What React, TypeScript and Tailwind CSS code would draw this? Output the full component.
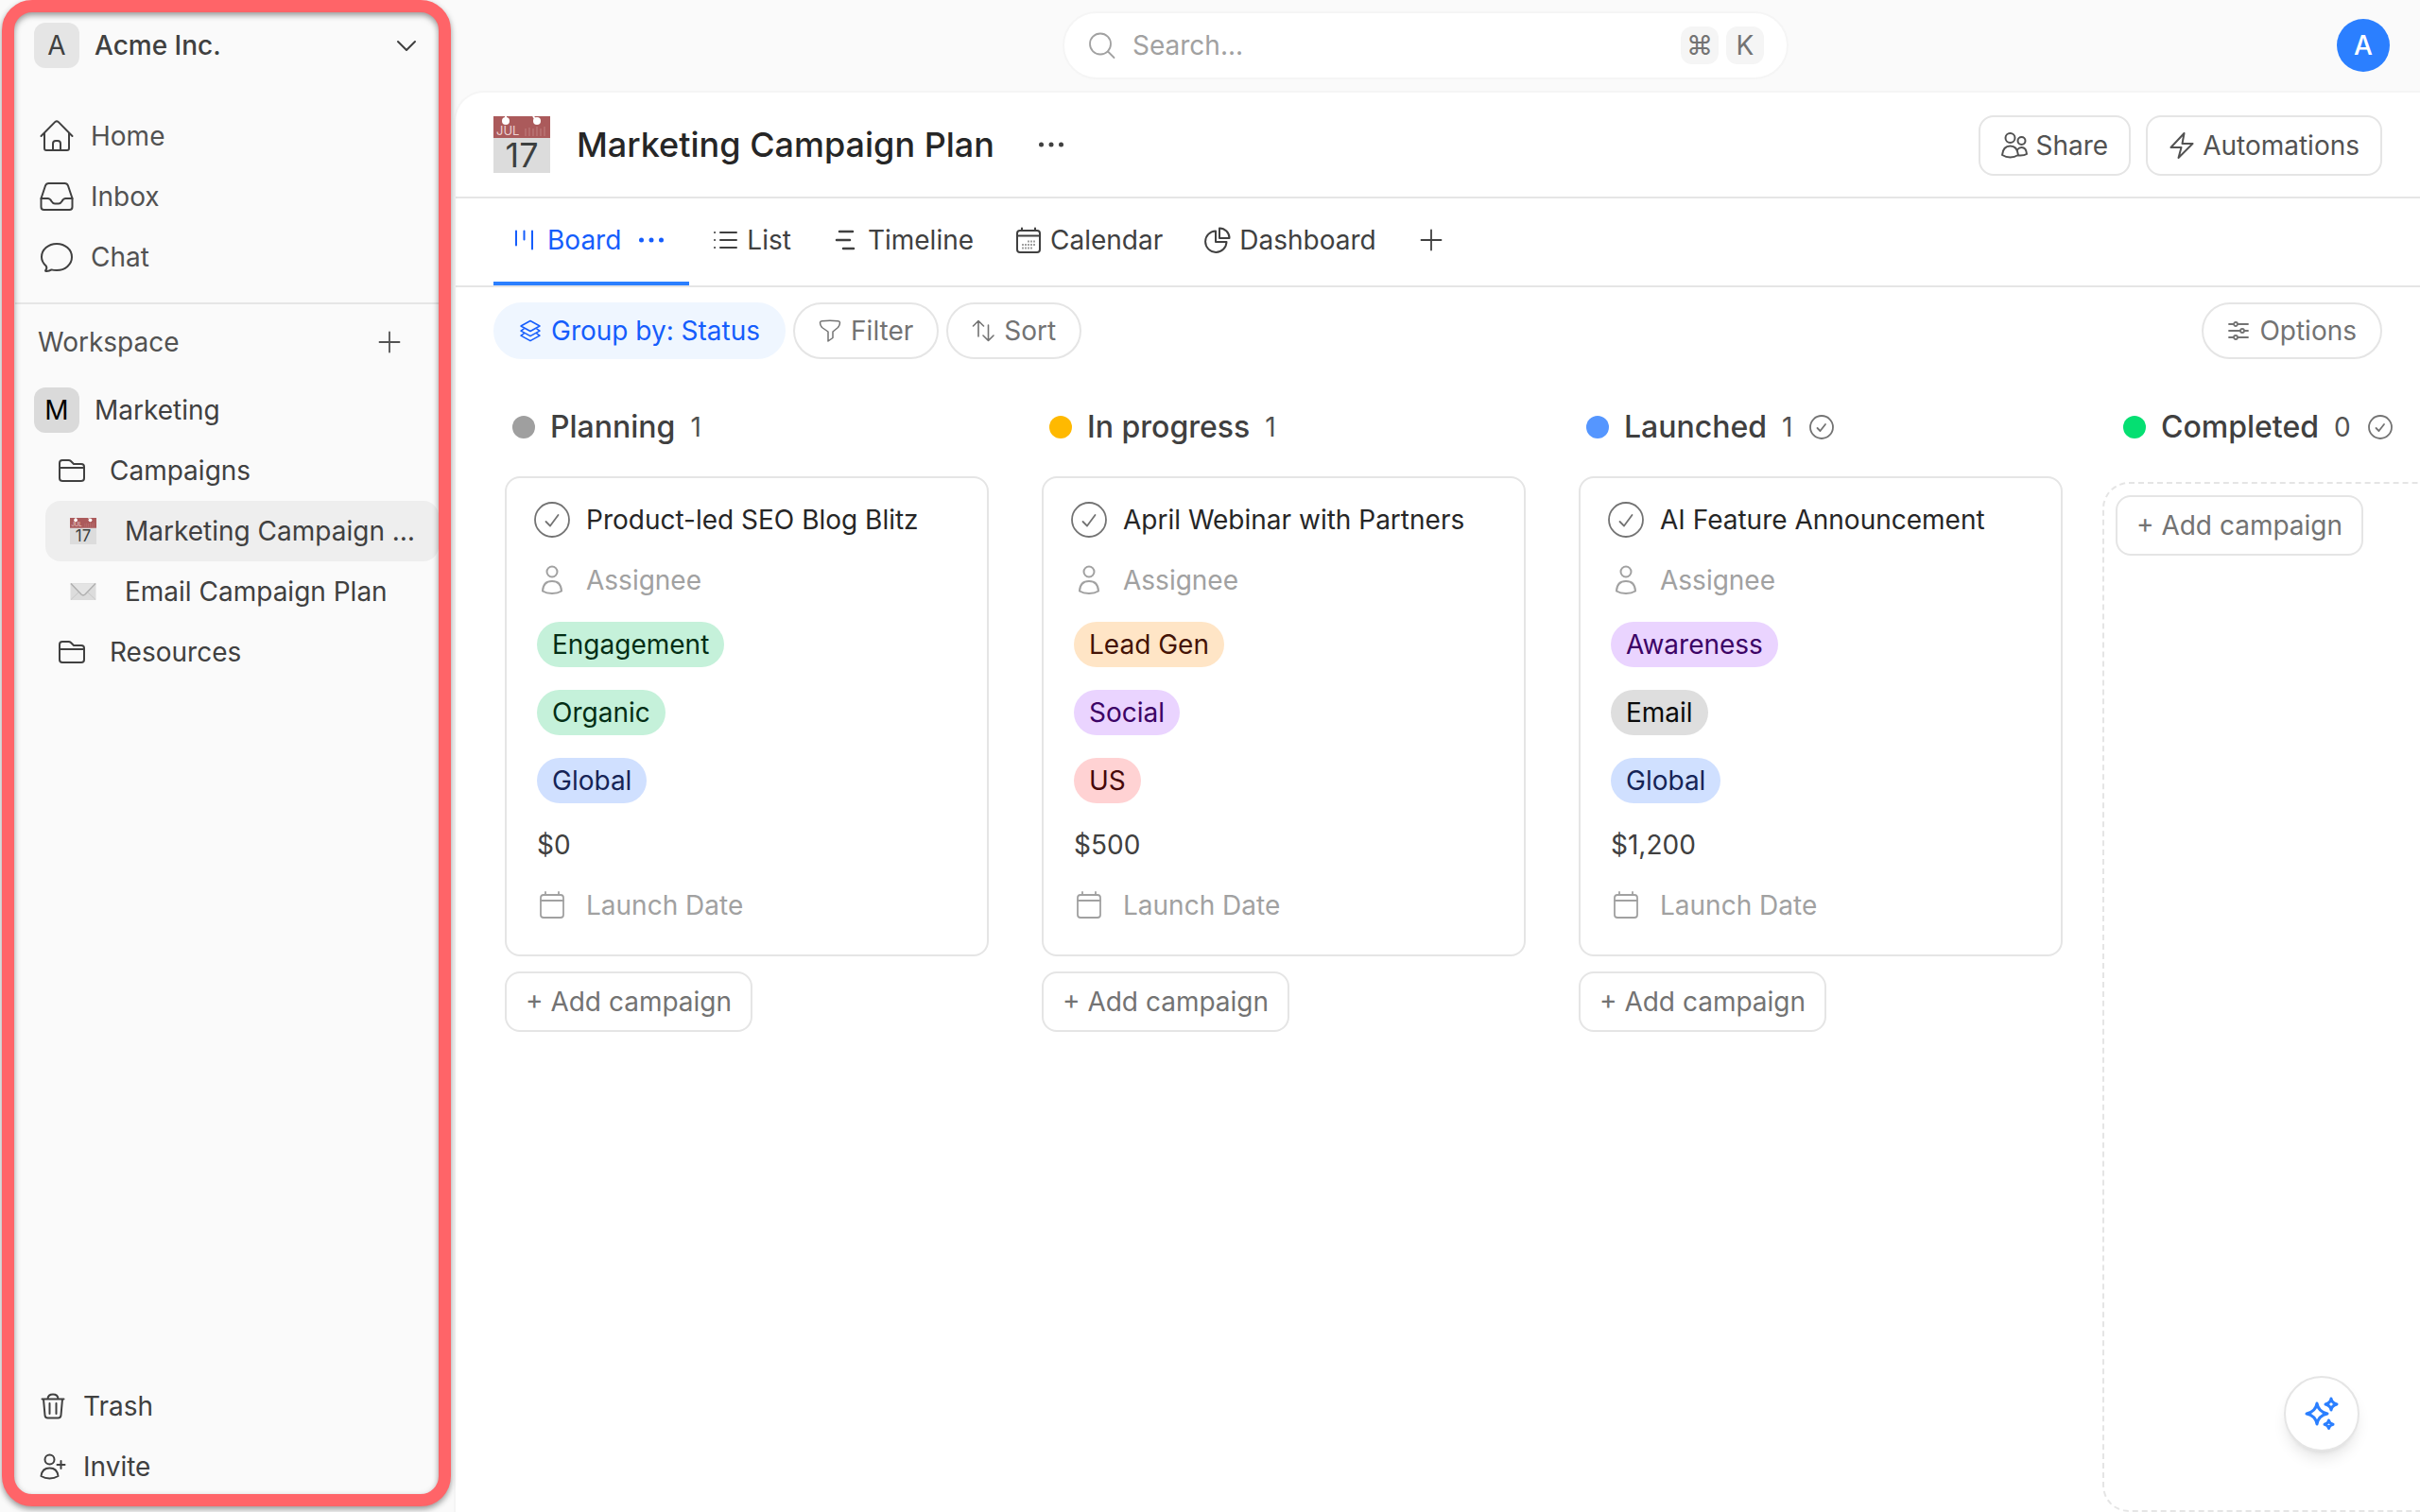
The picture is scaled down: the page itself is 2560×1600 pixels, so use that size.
import { useState, type ReactNode } from "react";

// ---------- icons ----------

function Icon({
  box,
  stroke = 2,
  className,
  children,
}: {
  box: number;
  stroke?: number;
  className?: string;
  children: ReactNode;
}) {
  return (
    <svg
      viewBox={`0 0 ${box} ${box}`}
      width={box}
      height={box}
      fill="none"
      stroke="currentColor"
      strokeWidth={stroke}
      strokeLinecap="round"
      strokeLinejoin="round"
      aria-hidden="true"
      className={"shrink-0 " + (className ?? "")}
    >
      {children}
    </svg>
  );
}

const HomeIcon = () => (
  <Icon box={36} className="text-[#404040]">
    <path d="M1.5 18 16.4 2.9q1.6-1.4 3.2 0L34.5 18" />
    <path d="M5 15v16q0 2 2 2h22q2 0 2-2V15" />
    <path d="M14 33v-7q0-3 3-3h2q3 0 3 3v7" />
  </Icon>
);

const InboxIcon = () => (
  <Icon box={36} className="text-[#404040]">
    <path d="M1.5 20 6 6.5Q7 4 9.5 4h17Q29 4 30 6.5L34.5 20v9q0 3-3 3h-27q-3 0-3-3z" />
    <path d="M1.5 20h7q2.5 0 4 3 1.5 2.5 3.5 2.5h4q2 0 3.5-2.5 1.5-3 4-3h7" />
  </Icon>
);

const ChatIcon = () => (
  <Icon box={36} className="text-[#404040]">
    <path d="M6.8 27.5C3.8 24.8 2 21.5 2 18 2 10.3 9 4 18 4s16 6.3 16 14-7 14-16 14c-2 0-3.8-.1-5.5-.6-1.5 1-3.5 1.8-5.7 1.6-.8 0-1-.6-.4-1.2 1-1.2 1.2-2.8.4-4.3z" />
  </Icon>
);

const ChevronIcon = () => (
  <Icon box={24} className="text-[#404040]">
    <path d="M3 8l9 9 9-9" />
  </Icon>
);

const PlusIcon = () => (
  <Icon box={24} stroke={1.8}>
    <path d="M12 1.5v21M1.5 12h21" />
  </Icon>
);

const FolderIcon = () => (
  <Icon box={28} className="text-[#404040]">
    <path d="M1 11V6q0-3 3-3h6.5q1.5 0 2.5 1l3 3h8q3 0 3 3v12q0 3-3 3H4q-3 0-3-3V11h26" />
  </Icon>
);

const TrashIcon = () => (
  <Icon box={28} className="text-[#404040]">
    <path d="M2.5 6.500h23M4 6.500l1.500 17q.2 3 3 3h11q2.800 0 3-3L24 6.500M8.500 6q.5-4.500 5.500-4.500t5.500 4.500M10.500 11v11M17.500 11v11" />
  </Icon>
);

const InviteIcon = () => (
  <Icon box={28} className="text-[#404040]">
    <circle cx="10.5" cy="6.5" r="5" />
    <path d="M1.5 24q1-8.5 9-8.5t9 8.5q-4 2.5-9 2.5t-9-2.5zM22.5 8v8M18.5 12h8" />
  </Icon>
);

const UserIcon = () => (
  <Icon box={32}>
    <circle cx="16" cy="7" r="5.5" />
    <path d="M6 27.5Q6.5 17 16 17t10 10.5q-4 2.5-10 2.5T6 27.5z" />
  </Icon>
);

const ShareIcon = () => (
  <Icon box={28}>
    <circle cx="9.5" cy="6" r="5" />
    <circle cx="21.5" cy="9" r="4" />
    <path d="M1 24q1-9.5 8.5-9.5T18 24q-4 2.5-8.5 2.5T1 24z" />
    <path d="M17 18.5q2-2.5 4.5-2.5 5 0 5.5 7-3 2-9 1.5" />
  </Icon>
);

const BoltIcon = () => (
  <Icon box={28}>
    <path d="M16.5 1 2.5 16h11l-3 11L25.5 12H14.5z" />
  </Icon>
);

const DotsIcon = () => (
  <Icon box={28}>
    <g fill="currentColor" stroke="none">
      <circle cx="3.5" cy="14" r="2.5" />
      <circle cx="14" cy="14" r="2.5" />
      <circle cx="24.5" cy="14" r="2.5" />
    </g>
  </Icon>
);

const SearchIcon = () => (
  <Icon box={32} stroke={1.8} className="text-[#a1a1a1]">
    <circle cx="14" cy="14.5" r="11" />
    <path d="M22 22.5l6.500 6.500" />
  </Icon>
);

const BoardIcon = () => (
  <Icon box={28}>
    <path d="M4 4.5v15M12.500 4.500v9M21 4.500v19" />
  </Icon>
);

const ListIcon = () => (
  <Icon box={28}>
    <path d="M9 6h17M9 14h17M9 22h17M3 6h.1M3 14h.1M3 22h.1" />
  </Icon>
);

const TimelineIcon = () => (
  <Icon box={28}>
    <path d="M7 5h14M4 14h14M11 23h11" strokeWidth="2.5" />
  </Icon>
);

const CalendarDotsIcon = () => (
  <Icon box={28}>
    <rect x="2" y="4" width="24" height="23" rx="3" />
    <path d="M2 9.500h24M7 1.500v2.500M21 1.500v2.500" />
    <path
      d="M13 15.500h8M7 19h14M7 22.500h11"
      strokeLinecap="butt"
      strokeDasharray="2 1"
      className="opacity-50"
    />
  </Icon>
);

const CalendarIcon = () => (
  <Icon box={32} stroke={1.8}>
    <rect x="4" y="5" width="24" height="24" rx="3" />
    <path d="M4 11h24M9 2v3M23 2v3" />
  </Icon>
);

const PieIcon = () => (
  <Icon box={28}>
    <path d="M12 4.5A11.2 11.2 0 1 0 23.500 16H12z" />
    <path d="M16 1.500V12h10.500A10.500 10.500 0 0 0 16 1.500z" />
  </Icon>
);

const LayersIcon = () => (
  <Icon box={24} stroke={1.5}>
    <path d="M12 1.5l10 5.500-10 5.500L2 7z" />
    <path d="M5 10.200l-3 2 10 5.500 10-5.500-3-2M5 15.200l-3 2 10 5.500 10-5.500-3-2" />
  </Icon>
);

const FilterIcon = () => (
  <Icon box={24} stroke={1.5}>
    <path d="M1.5 3.5q0-1.500 2-1.700 8.500-1 17 0 2 .2 2 1.700 0 2.500-2 5L15 13v6.500l-5 3.500V13L3.500 8.500q-2-2.500-2-5z" />
  </Icon>
);

const SortIcon = () => (
  <Icon box={24} stroke={1.6}>
    <path d="M7 18V1.5L1.5 7M7 1.5 12.5 7M17.5 6v16.5L12 17M17.5 22.5 23 17" />
  </Icon>
);

const OptionsIcon = () => (
  <Icon box={24} stroke={1.8}>
    <path d="M2 5h5M11 5h11M2 12h12M18 12h4M2 19h5M11 19h11" />
    <circle cx="9" cy="5" r="2" />
    <circle cx="16" cy="12" r="2" />
    <circle cx="9" cy="19" r="2" />
  </Icon>
);

const CheckCircleIcon = () => (
  <Icon box={40} stroke={1.8} className="text-[#737373]">
    <circle cx="20" cy="20" r="18" />
    <path d="M13.5 22l4.500 4.500L26.500 15" />
  </Icon>
);

const SmallCheckIcon = () => (
  <Icon box={28} stroke={1.8} className="text-[#737373]">
    <circle cx="15" cy="14" r="12" />
    <path d="M10.5 15l3 3 5.500-7" />
  </Icon>
);

const SparklesIcon = () => (
  <svg viewBox="0 0 40 40" className="size-10" fill="none" stroke="#2b7fff" strokeWidth="3" strokeLinejoin="round" aria-hidden="true">
    <path d="M15 9q1.500 9 11 11-9.500 2-11 11-1.500-9-11-11 9.500-2 11-11z" />
    <path d="M30 4q.8 4.800 6 6-5.200 1.200-6 6-.8-4.800-6-6 5.200-1.200 6-6z" />
    <path d="M27.500 27q.6 3.400 4.500 4.300-3.900.9-4.500 4.300-.6-3.400-4.500-4.300 3.900-.9 4.500-4.300z" />
  </svg>
);

function CalendarEmoji({ className }: { className: string }) {
  return (
    <svg viewBox="0 0 60 60" className={"shrink-0 overflow-visible " + className} aria-hidden="true">
      <rect width="60" height="60" fill="#dcdcdc" />
      <rect width="60" height="23" fill="#ab5a5b" />
      <circle cx="13" cy="5" r="4" fill="#fff" />
      <circle cx="46" cy="5" r="4" fill="#fff" />
      <path d="M13 4V0M45 4L42 0" stroke="#fff" strokeWidth="2" />
      <path d="M34 13v8M38 12v9M42 13v8M46 11v10M50 13v8M54 11v10" stroke="#bd7b7b" strokeWidth="1.2" />
      <text x="3" y="20" fontSize="13" fill="#ecd2d2" className="font-[Inter]">
        JUL
      </text>
      <text x="30" y="54" textAnchor="middle" fontSize="36" fill="#3c4040" className="font-[Inter]">
        17
      </text>
    </svg>
  );
}

const MailEmoji = () => (
  <svg viewBox="0 0 28 28" className="size-7 shrink-0" aria-hidden="true">
    <rect x="0.5" y="5" width="27" height="18" fill="#dcdcdc" />
    <path d="M1 22.500l9.500-9M27 22.500l-9.500-9" stroke="#c8c8c8" fill="none" />
    <path d="M1 5.500l11 11.500q2 1.800 4 0l11-11.500" stroke="#b0b0b0" strokeWidth="1.5" fill="#e4e4e4" />
  </svg>
);

// ---------- data ----------

const TAG_COLORS = {
  green: "bg-[#c5f1da] text-[#032e15]",
  blue: "bg-[#d0e0ff] text-[#162456]",
  orange: "bg-[#ffe5c6] text-[#441306]",
  purple: "bg-[#ead4ff] text-[#3c0366]",
  red: "bg-[#ffd2d3] text-[#460809]",
  gray: "bg-[#dedede] text-[#0a0a0a]",
};

type Campaign = {
  title: string;
  tags: { label: string; color: keyof typeof TAG_COLORS }[];
  budget: string;
};

type Column = { name: string; dot: string; done?: boolean; cards: Campaign[] };

const columns: Column[] = [
  {
    name: "Planning",
    dot: "bg-[#9f9f9f]",
    cards: [
      {
        title: "Product-led SEO Blog Blitz",
        tags: [
          { label: "Engagement", color: "green" },
          { label: "Organic", color: "green" },
          { label: "Global", color: "blue" },
        ],
        budget: "$0",
      },
    ],
  },
  {
    name: "In progress",
    dot: "bg-[#ffb900]",
    cards: [
      {
        title: "April Webinar with Partners",
        tags: [
          { label: "Lead Gen", color: "orange" },
          { label: "Social", color: "purple" },
          { label: "US", color: "red" },
        ],
        budget: "$500",
      },
    ],
  },
  {
    name: "Launched",
    dot: "bg-[#5596ff]",
    done: true,
    cards: [
      {
        title: "AI Feature Announcement",
        tags: [
          { label: "Awareness", color: "purple" },
          { label: "Email", color: "gray" },
          { label: "Global", color: "blue" },
        ],
        budget: "$1,200",
      },
    ],
  },
  { name: "Completed", dot: "bg-[#05df72]", done: true, cards: [] },
];

const tabs = [
  { name: "Board", icon: <BoardIcon /> },
  { name: "List", icon: <ListIcon /> },
  { name: "Timeline", icon: <TimelineIcon /> },
  { name: "Calendar", icon: <CalendarDotsIcon /> },
  { name: "Dashboard", icon: <PieIcon /> },
];

// ---------- sidebar ----------

function Sidebar() {
  return (
    <aside className="relative flex w-[480px] shrink-0 flex-col px-4 text-[#404040]">
      <button className="flex h-24 items-center gap-4 pl-5 pr-[22px] text-left">
        <span className="flex size-12 items-center justify-center rounded-xl bg-[#e5e5e5]">A</span>
        <span className="flex-1 font-medium">Acme Inc.</span>
        <ChevronIcon />
      </button>

      <nav className="mt-4 pb-4">
        <a href="#home" className="flex h-16 items-center gap-[18px] pl-[26px] text-[#525252]">
          <HomeIcon /> Home
        </a>
        <a href="#inbox" className="flex h-16 items-center gap-[18px] pl-[26px] text-[#525252]">
          <InboxIcon /> Inbox
        </a>
        <a href="#chat" className="flex h-16 items-center gap-[18px] pl-[26px] text-[#525252]">
          <ChatIcon /> Chat
        </a>
      </nav>

      <div className="flex h-[82px] items-center justify-between border-t-2 border-[#e5e5e5] pl-6 pr-10 text-[#525252]">
        <h2>Workspace</h2>
        <button aria-label="Add to workspace">
          <PlusIcon />
        </button>
      </div>

      <nav className="flex-1">
        <a href="#marketing" className="flex h-16 items-center gap-4 pl-5">
          <span className="flex size-12 items-center justify-center rounded-xl bg-[#dadada] text-black">M</span>
          Marketing
        </a>
        <a href="#campaigns" className="flex h-16 items-center gap-[26px] pl-[46px]">
          <FolderIcon /> Campaigns
        </a>
        <a href="#plan" className="ml-8 flex h-16 items-center gap-[30px] rounded-2xl bg-[#eeeeee] pl-[26px] pr-5">
          <CalendarEmoji className="size-7" />
          <span className="truncate">Marketing Campaign Plan</span>
        </a>
        <a href="#email" className="ml-8 flex h-16 items-center gap-[30px] pl-[26px] pr-5">
          <MailEmoji />
          <span className="truncate">Email Campaign Plan</span>
        </a>
        <a href="#resources" className="flex h-16 items-center gap-[26px] pl-[46px]">
          <FolderIcon /> Resources
        </a>
      </nav>

      <nav className="pb-4">
        <a href="#trash" className="flex h-16 items-center gap-[18px] pl-[26px]">
          <TrashIcon /> Trash
        </a>
        <a href="#invite" className="flex h-16 items-center gap-[18px] pl-[26px]">
          <InviteIcon /> Invite
        </a>
      </nav>

      {/* highlight frame over the sidebar */}
      <div className="pointer-events-none absolute bottom-[6px] left-[2px] right-[3px] top-0 rounded-[32px] border-[13px] border-[#ff6468] drop-shadow-[0_3px_3px_rgba(0,0,0,0.4)]" />
    </aside>
  );
}

// ---------- board ----------

function AddCampaign() {
  return (
    <button className="h-16 self-start rounded-2xl border-2 border-[#e5e5e5] bg-white px-5 text-[#737373]">
      + Add campaign
    </button>
  );
}

function CampaignCard({ card }: { card: Campaign }) {
  return (
    <article className="rounded-2xl border-2 border-[#e5e5e5] bg-white px-7 pb-5 pt-3">
      <div className="flex h-16 items-center gap-4">
        <button aria-label="Mark complete">
          <CheckCircleIcon />
        </button>
        <h4 className="text-[#262626]">{card.title}</h4>
      </div>
      <div className="flex h-16 items-center gap-5 pl-1 text-[#a1a1a1]">
        <UserIcon /> Assignee
      </div>
      {card.tags.map((tag) => (
        <div key={tag.label} className="flex h-[72px] items-center pl-1">
          <span className={"flex h-12 items-center rounded-full px-4 " + TAG_COLORS[tag.color]}>{tag.label}</span>
        </div>
      ))}
      <div className="flex h-16 items-center pl-1">{card.budget}</div>
      <div className="flex h-16 items-center gap-5 pl-1 text-[#a1a1a1]">
        <CalendarIcon /> Launch Date
      </div>
    </article>
  );
}

function BoardColumn({ column }: { column: Column }) {
  const empty = column.cards.length === 0;

  return (
    <section className="flex w-[540px] shrink-0 flex-col">
      <header className="flex h-16 items-center gap-4 pl-[22px]">
        <span className={"size-6 rounded-full " + column.dot} />
        <h3 className="text-[32px] font-medium">{column.name}</h3>
        <span className="text-[#525252]">{column.cards.length}</span>
        {column.done && <SmallCheckIcon />}
      </header>
      <div
        className={
          "flex flex-1 flex-col gap-4 rounded-[28px] border-2 p-3 " +
          (empty ? "mt-[26px] border-dashed border-[#e5e5e5]" : "mt-[6px] border-transparent")
        }
      >
        {column.cards.map((card) => (
          <CampaignCard key={card.title} card={card} />
        ))}
        <AddCampaign />
      </div>
    </section>
  );
}

export default function App() {
  const [activeTab, setActiveTab] = useState("Board");
  const [query, setQuery] = useState("");

  return (
    <div className="flex h-screen overflow-hidden bg-[#fafafa] font-[Inter,sans-serif] text-[28px] leading-10 text-[#404040]">
      <Sidebar />

      <div className="flex min-w-0 flex-1 flex-col">
        <header className="grid h-24 shrink-0 grid-cols-[1fr_768px_1fr] items-center pl-2 pr-8">
          <label className="col-start-2 flex h-[72px] items-center gap-4 rounded-full border-2 border-[#f5f5f5] bg-white px-6">
            <SearchIcon />
            <input
              type="text"
              aria-label="Search"
              placeholder="Search..."
              value={query}
              onChange={(e) => setQuery(e.target.value)}
              className="min-w-0 flex-1 outline-none placeholder:text-[#a1a1a1]"
            />
            <span className="flex gap-2 text-[#737373]">
              <kbd className="flex size-10 items-center justify-center rounded-xl bg-[#f5f5f5] font-[Inter,sans-serif]">⌘</kbd>
              <kbd className="flex size-10 items-center justify-center rounded-xl bg-[#f5f5f5] font-[Inter,sans-serif]">K</kbd>
            </span>
          </label>
          <button className="size-14 justify-self-end rounded-full bg-[#2b7fff] font-medium text-white">A</button>
        </header>

        <main className="flex min-h-0 flex-1 flex-col rounded-tl-[32px] border-l-2 border-t-2 border-[#f5f5f5] bg-white">
          <div className="flex h-28 shrink-0 items-center border-b-2 border-[#e5e5e5] px-10">
            <CalendarEmoji className="size-[60px]" />
            <h1 className="ml-7 text-[36px] font-medium text-[#262626]">Marketing Campaign Plan</h1>
            <button className="ml-[46px]" aria-label="Plan menu">
              <DotsIcon />
            </button>
            <div className="ml-auto flex gap-4 pt-[2px] text-[#525252]">
              <button className="flex h-16 items-center gap-2 rounded-2xl border-2 border-[#e5e5e5] px-[22px]">
                <ShareIcon /> Share
              </button>
              <button className="flex h-16 items-center gap-2 rounded-2xl border-2 border-[#e5e5e5] px-[22px]">
                <BoltIcon /> Automations
              </button>
            </div>
          </div>

          <div className="flex h-[94px] shrink-0 gap-1 border-b-2 border-[#e5e5e5] px-10">
            {tabs.map((tab) => {
              const active = tab.name === activeTab;
              return (
                <div
                  key={tab.name}
                  className={
                    "flex items-center gap-[18px] border-b-4 px-5 " +
                    (active ? "border-[#2b7fff] text-[#155dfc]" : "border-transparent")
                  }
                >
                  <button className="flex items-center gap-[9px]" onClick={() => setActiveTab(tab.name)}>
                    {tab.icon} {tab.name}
                  </button>
                  {active && (
                    <button className="pr-[6px]" aria-label="View menu">
                      <DotsIcon />
                    </button>
                  )}
                </div>
              );
            })}
            <button className="ml-[22px] border-b-4 border-transparent" aria-label="Add view">
              <PlusIcon />
            </button>
          </div>

          <div className="flex h-[92px] shrink-0 items-center gap-2 px-10 text-[#737373]">
            <button className="flex h-[60px] items-center gap-[10px] rounded-full border-2 border-[#eff6ff] bg-[#eff6ff] px-[25px] text-[#155dfc]">
              <LayersIcon /> Group by: Status
            </button>
            <button className="flex h-[60px] items-center gap-[10px] rounded-full border-2 border-[#e5e5e5] px-[25px]">
              <FilterIcon /> Filter
            </button>
            <button className="flex h-[60px] items-center gap-[10px] rounded-full border-2 border-[#e5e5e5] px-[25px]">
              <SortIcon /> Sort
            </button>
            <button className="ml-auto flex h-[60px] items-center gap-[10px] rounded-full border-2 border-[#e5e5e5] px-[25px]">
              <OptionsIcon /> Options
            </button>
          </div>

          <div className="flex min-h-0 flex-1 gap-7 overflow-hidden pl-[38px] pt-6">
            {columns.map((column) => (
              <BoardColumn key={column.name} column={column} />
            ))}
          </div>
        </main>
      </div>

      <button
        aria-label="Ask AI"
        className="fixed bottom-16 right-16 flex size-20 items-center justify-center rounded-full border-2 border-[#e5e5e5] bg-white shadow-lg"
      >
        <SparklesIcon />
      </button>
    </div>
  );
}
